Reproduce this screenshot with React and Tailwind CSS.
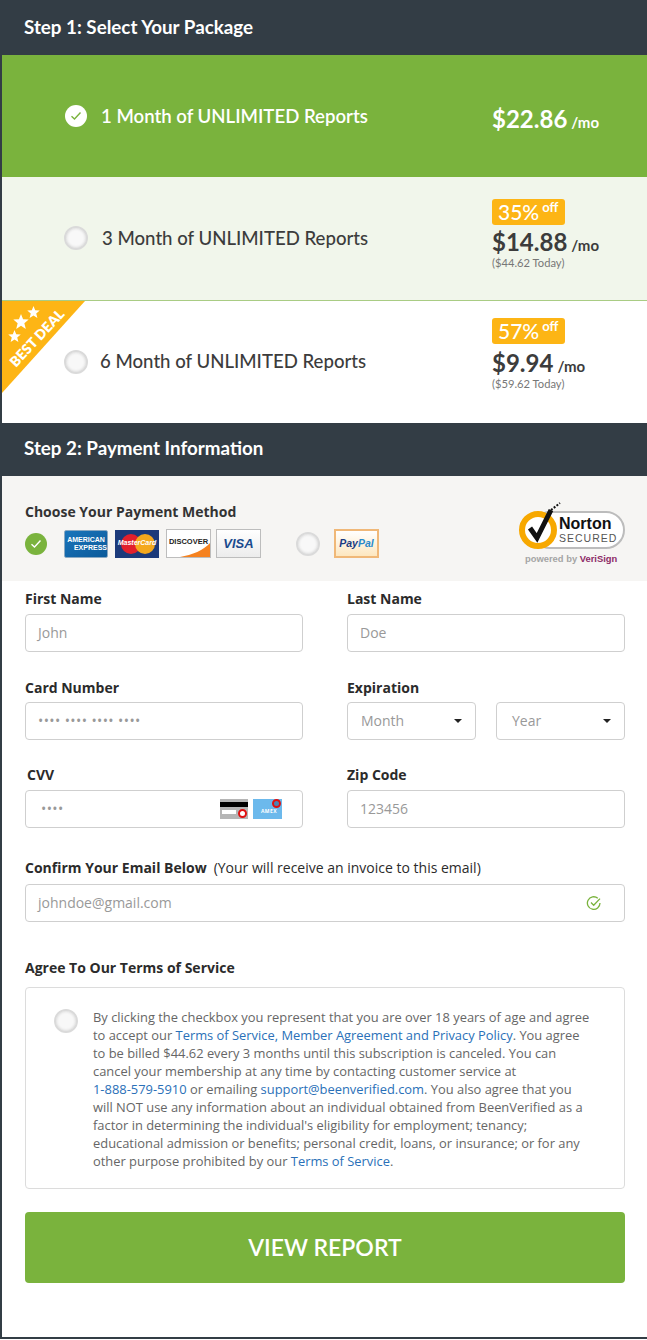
import React from 'react';

const lato = "font-['Lato',sans-serif]";
const open = "font-['Open_Sans',sans-serif]";

const Radio = ({ className = '' }) => (
  <span className={`block w-[24px] h-[24px] rounded-full bg-[#f8f8f8] border-2 border-[#dadada] shadow-[inset_0_0_3px_#ccc] shrink-0 ${className}`} />
);

const Check = ({ bg, stroke, className = '' }) => (
  <span className={`flex items-center justify-center w-[22px] h-[22px] rounded-full shrink-0 ${bg} ${className}`}>
    <svg width="12" height="10" viewBox="0 0 12 10" fill="none">
      <path d="M1.5 5.2 L4.5 8 L10.5 1.5" stroke={stroke} strokeWidth="1.4" />
    </svg>
  </span>
);

const Price = ({ off, price, today, className = '', gap = 'mt-[3px]' }) => (
  <div className={`w-[155px] shrink-0 ${lato} ${className}`}>
    <div className="w-[73px] h-[26px] rounded-[3px] bg-[#fdb515] text-white flex items-start pl-[6px] pt-[1px]">
      <span className="text-[21px] leading-[24px] font-medium">{off}</span>
      <span className="text-[13px] leading-[14px] font-bold ml-[3px]">off</span>
    </div>
    <div className={`text-[#3c3c3c] leading-[28px] whitespace-nowrap ${gap}`}>
      <span className="text-[24px] font-bold">{price}</span>
      <span className="text-[15px] font-bold ml-[4px]">/mo</span>
    </div>
    <div className="-mt-[2px] text-[11.2px] leading-[12px] text-[#777]">{today}</div>
  </div>
);

const Label = ({ children, className = '' }) => (
  <div className={`text-[14px] leading-[18px] font-bold text-[#2b2b2b] ${open} ${className}`}>{children}</div>
);

const Field = ({ children, className = '' }) => (
  <div className={`h-[38px] pb-[1px] rounded-[4px] border border-[#cfcfcf] bg-white flex items-center text-[14px] text-[#999] ${open} ${className}`}>{children}</div>
);

const Select = ({ children, className = '' }) => (
  <Field className={`w-[129px] pr-[13px] justify-between ${className}`}>
    <span>{children}</span>
    <span className="w-0 h-0 border-x-[4px] border-x-transparent border-t-[4px] border-t-[#222]" />
  </Field>
);

const Amex = () => (
  <div className="w-[44px] h-[28px] rounded-[2px] bg-gradient-to-br from-[#1a75bb] to-[#0b5a9a] border border-[#8aa9c2] flex flex-col items-center justify-center text-white font-bold text-[7px] leading-[8px] font-['Liberation_Sans',sans-serif]">
    <span>AMERICAN</span>
    <span className="self-end">EXPRESS</span>
  </div>
);

const MasterCard = () => (
  <div className="relative w-[44px] h-[28px] ml-[7px] bg-[#1c3a7a] flex items-center justify-center overflow-hidden">
    <span className="absolute left-[6px] top-[4px] w-[20px] h-[20px] rounded-full bg-[#e2202c]" />
    <span className="absolute left-[20px] top-[4px] w-[20px] h-[20px] rounded-full bg-[#f4a81d]" />
    <span className="relative text-white italic font-bold text-[7px] font-['Liberation_Sans',sans-serif]">MasterCard</span>
  </div>
);

const Discover = () => (
  <div className="relative w-[45px] h-[29px] ml-[7px] bg-white border border-[#bdbdbd] overflow-hidden flex items-start justify-center pt-[7px]">
    <svg className="absolute right-0 bottom-0" width="30" height="14" viewBox="0 0 30 14"><path d="M0 14 C12 12 24 7 30 0 V14 Z" fill="#f58220" /></svg>
    <span className="relative text-[#222] font-bold text-[7.5px] leading-[9px] font-['Liberation_Sans',sans-serif]">DISCOVER</span>
  </div>
);

const Visa = () => (
  <div className="w-[45px] h-[29px] ml-[5px] bg-gradient-to-b from-white to-[#ececec] border border-[#bdbdbd] flex items-center justify-center text-[#1a4b8e] italic font-bold text-[13px] font-['Liberation_Sans',sans-serif]">VISA</div>
);

const PayPal = () => (
  <div className="w-[45px] h-[29px] ml-[14px] bg-gradient-to-b from-white to-[#fde7bf] border-2 border-[#f0b878] flex items-center justify-center italic font-bold text-[10.5px] font-['Liberation_Sans',sans-serif]">
    <span className="text-[#1a3b82]">Pay</span><span className="text-[#2b8acb]">Pal</span>
  </div>
);

const Norton = () => (
  <div className="w-[108px] shrink-0">
    <svg width="108" height="50" viewBox="0 0 108 50">
      <rect x="14" y="10" width="92" height="36" rx="18" fill="#fff" stroke="#bcbcbc" strokeWidth="2" />
      <circle cx="20" cy="28" r="16" fill="#fff" stroke="#f7a800" strokeWidth="6" />
      <path d="M12 26 L19 36 L33 8" fill="none" stroke="#111" strokeWidth="5" />
      <path d="M33 8 L42 1" stroke="#111" strokeWidth="2" strokeDasharray="2 1.5" />
      <text x="41" y="27" fontFamily="Liberation Sans, sans-serif" fontWeight="700" fontSize="16" fill="#111">Norton</text>
      <text x="41" y="40" fontFamily="Liberation Sans, sans-serif" fontSize="10.5" letterSpacing="1" fill="#555">SECURED</text>
    </svg>
    <div className="pl-[7px] mt-[1px] text-[9.4px] leading-[12px] font-bold text-[#a5a5a5] whitespace-nowrap font-['Liberation_Sans',sans-serif]">
      powered by <span className="text-[#8d2a66]">VeriSign</span>
    </div>
  </div>
);

const CvvCards = () => (
  <div className="flex gap-[5px]">
    <div className="relative w-[28px] h-[20px] bg-[#b5b5b5]">
      <div className="h-[5px] mt-[3px] bg-black" />
      <div className="w-[14px] h-[4px] mt-[3px] ml-[2px] bg-white" />
      <span className="absolute right-[1px] bottom-[1px] w-[9px] h-[9px] rounded-full border-2 border-[#e01010] bg-white" />
    </div>
    <div className="relative w-[29px] h-[20px] bg-[#6cb9ec]">
      <span className="absolute left-[8px] top-[9px] text-white font-bold text-[5px] leading-[6px]">AMEX</span>
      <span className="absolute right-[1px] top-0 w-[9px] h-[9px] rounded-full border-2 border-[#e01010] bg-[#4d84b5]" />
    </div>
  </div>
);

const Star = ({ size, className }) => (
  <svg className={`absolute ${className}`} width={size} height={size} viewBox="0 0 20 20" fill="#fff">
    <polygon points="10,0 12.6,6.6 19.6,7 14.2,11.6 16,18.6 10,14.8 4,18.6 5.8,11.6 0.4,7 7.4,6.6" />
  </svg>
);

const BestDeal = () => (
  <div className="absolute left-0 top-0 w-[83px] h-[92px] bg-[#fdb515] [clip-path:polygon(0_0,100%_0,0_100%)] overflow-hidden">
    <span className={`absolute left-[-2px] top-[30px] w-[74px] text-center text-white font-extrabold text-[14px] leading-[14px] whitespace-nowrap -rotate-[47deg] ${lato}`}>BEST DEAL</span>
    <Star size={16} className="left-[11px] top-[13px]" />
    <Star size={13} className="left-[25px] top-[5px]" />
    <Star size={13} className="left-[6px] top-[29px]" />
  </div>
);

const Link = ({ children }) => <span className="text-[#2a70b8] whitespace-nowrap">{children}</span>;

const App = () => (
  <div className="w-[647px] h-[1340px] bg-white">
    <div className="h-[1339px] border-l-2 border-b-2 border-[#333d45]">
      <div className="-ml-[2px] h-[55px] bg-[#333d45] flex items-center">
        <span className={`pl-[24px] text-white text-[18.8px] font-bold ${lato}`}>Step 1: Select Your Package</span>
      </div>

      {/* Packages */}
      <div className={`h-[122px] bg-[#7ab33d] flex items-center justify-between pl-[63px] ${lato}`}>
        <div className="flex items-center text-white text-[18.6px] font-semibold">
          <Check bg="bg-white" stroke="#7ab33d" />
          <span className="ml-[14px] mt-[1px]">1 Month of UNLIMITED Reports</span>
        </div>
        <div className="w-[155px] text-white whitespace-nowrap mt-[5px]">
          <span className="text-[24px] font-bold">$22.86</span>
          <span className="text-[15px] font-bold ml-[4px]">/mo</span>
        </div>
      </div>
      <div className={`h-[124px] bg-[#f1f6eb] border-b border-[#a9cc84] flex items-center justify-between pl-[62px] ${lato}`}>
        <div className="flex items-center text-[#3c3c3c] text-[18.6px] font-medium">
          <Radio />
          <span className="ml-[14px]">3 Month of UNLIMITED Reports</span>
        </div>
        <Price off="35%" price="$14.88" today="($44.62 Today)" className="pb-[10px]" />
      </div>
      <div className={`relative h-[122px] flex items-center justify-between pl-[62px] ${lato}`}>
        <BestDeal />
        <div className="flex items-center text-[#3c3c3c] text-[18.6px] font-medium">
          <Radio />
          <span className="ml-[12px]">6 Month of UNLIMITED Reports</span>
        </div>
        <Price off="57%" price="$9.94" today="($59.62 Today)" className="pb-[16px]" gap="mt-[5px]" />
      </div>

      <div className="-ml-[2px] h-[53px] bg-[#333d45] flex items-center pb-[2px]">
        <span className={`pl-[24px] text-white text-[18.8px] font-bold ${lato}`}>Step 2: Payment Information</span>
      </div>

      {/* Payment method */}
      <div className="h-[105px] bg-[#f6f5f3] flex justify-between pl-[23px] pr-[21px] pt-[26px]">
        <div>
          <div className={`text-[14px] leading-[19px] font-bold text-[#333] ${open}`}>Choose Your Payment Method</div>
          <div className="flex items-center mt-[8px]">
            <Check bg="bg-[#7ab33d]" stroke="#fff" />
            <div className="flex items-center ml-[17px]">
              <Amex />
              <MasterCard />
              <Discover />
              <Visa />
            </div>
            <Radio className="ml-[35px]" />
            <PayPal />
          </div>
        </div>
        <Norton />
      </div>

      {/* Form */}
      <div className="pl-[23px] pr-[22px] pt-[9px]">
        <div className="grid grid-cols-[278px_278px] gap-x-[44px]">
          <div>
            <Label>First Name</Label>
            <Field className="mt-[6px] px-[12px]">John</Field>
          </div>
          <div>
            <Label>Last Name</Label>
            <Field className="mt-[6px] px-[12px]">Doe</Field>
          </div>
          <div className="mt-[27px]">
            <Label>Card Number</Label>
            <Field className="mt-[5px] pl-[12px] text-[9px] tracking-[0.4px]">•••• •••• •••• ••••</Field>
          </div>
          <div className="mt-[27px]">
            <Label>Expiration</Label>
            <div className="flex justify-between mt-[5px]">
              <Select className="pl-[13px]">Month</Select>
              <Select className="pl-[15px]">Year</Select>
            </div>
          </div>
          <div className="mt-[26px]">
            <Label className="ml-[2px]">CVV</Label>
            <Field className="mt-[6px] pl-[15px] pr-[20px] justify-between text-[9px] tracking-[0.4px]">
              <span>••••</span>
              <CvvCards />
            </Field>
          </div>
          <div className="mt-[26px]">
            <Label>Zip Code</Label>
            <Field className="mt-[6px] px-[12px]">123456</Field>
          </div>
        </div>

        <div className={`mt-[31px] text-[14px] leading-[18px] text-[#2b2b2b] ${open}`}>
          <span className="font-bold">Confirm Your Email Below</span>
          <span className="ml-[7px]">(Your will receive an invoice to this email)</span>
        </div>
        <Field className="mt-[7px] pl-[12px] pr-[22px] justify-between">
          <span>johndoe@gmail.com</span>
          <svg width="16" height="16" viewBox="0 0 16 16" fill="none" stroke="#7ab33d" strokeWidth="1.3">
            <path d="M14 8a6.3 6.3 0 1 1-2.2-4.7" />
            <path d="M5 7.5 L7.7 10.2 L14 3.6" />
          </svg>
        </Field>

        <Label className="mt-[37px]">Agree To Our Terms of Service</Label>
        <div className="mt-[10px] h-[202px] rounded-[4px] border border-[#dcdcdc] flex pl-[28px] pr-[31px] pt-[20px]">
          <Radio className="mt-[1px]" />
          <p className={`ml-[15px] text-[12.9px] leading-[18px] text-[#666] ${open}`}>
            By clicking the checkbox you represent that you are over 18 years of age and agree to accept our <span className="text-[#2a70b8]">Terms of Service, Member Agreement and Privacy Policy</span>. You agree to be billed $44.62 every 3 months until this subscription is canceled. You can cancel your membership at any time by contacting customer service at <Link>1-888-579-5910</Link> or emailing <Link>support@beenverified.com</Link>. You also agree that you will NOT use any information about an individual obtained from BeenVerified as a factor in determining the individual's eligibility for employment; tenancy; educational admission or benefits; personal credit, loans, or insurance; or for any other purpose prohibited by our <Link>Terms of Service</Link>.
          </p>
        </div>

        <button className={`mt-[23px] w-full h-[71px] rounded-[4px] bg-[#7ab33d] text-white text-[23px] font-semibold ${lato}`}>VIEW REPORT</button>
      </div>
    </div>
  </div>
);

export default App;
